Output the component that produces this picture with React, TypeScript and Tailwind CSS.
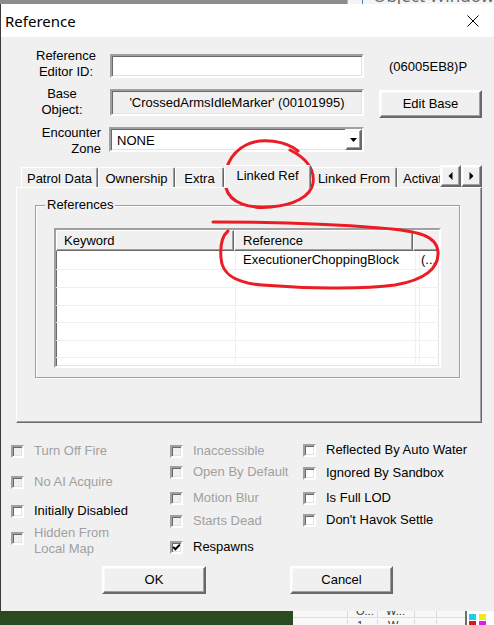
import React from "react";

const FONT = "font-['Liberation_Sans',Arial,sans-serif]";
const SUNKEN =
  "border-2 border-t-[#a0a0a0] border-l-[#a0a0a0] border-r-white border-b-white shadow-[inset_1px_1px_0_#696969,inset_-1px_-1px_0_#e3e3e3]";
const RAISED =
  "border-2 border-t-white border-l-white border-r-[#696969] border-b-[#696969] shadow-[inset_-1px_-1px_0_#a0a0a0,inset_1px_1px_0_#f8f8f8]";
const RAISED_THIN =
  "border border-t-white border-l-white border-r-[#696969] border-b-[#696969] shadow-[inset_-1px_-1px_0_#a0a0a0]";

function Box({ enabled = false, checked = false }: { enabled?: boolean; checked?: boolean }) {
  return (
    <span className={`block w-[13px] h-[13px] shrink-0 ${SUNKEN} ${enabled ? "bg-white" : "bg-[#f0f0f0]"}`}>
      {checked && (
        <svg width="9" height="9" viewBox="0 0 9 9" className="block">
          <path d="M1.2 4 L3.4 6.2 L7.8 1.6" stroke="#000" strokeWidth="2" fill="none" />
        </svg>
      )}
    </span>
  );
}

function CheckItem({
  lines,
  enabled = false,
  checked = false,
  className = "",
  boxTop = "mt-[2px]",
}: {
  lines: string[];
  enabled?: boolean;
  checked?: boolean;
  className?: string;
  boxTop?: string;
}) {
  return (
    <div className={`flex items-start ${className}`}>
      <span className={boxTop}>
        <Box enabled={enabled} checked={checked} />
      </span>
      <span className={`ml-[10px] leading-[16px] whitespace-nowrap ${enabled ? "text-black" : "text-[#a0a0a0]"}`}>
        {lines.map((l, i) => (
          <span key={i} className="block">
            {l}
          </span>
        ))}
      </span>
    </div>
  );
}

function Tab({ label, w }: { label: string; w: string }) {
  return (
    <div
      className={`${w} h-[20px] shrink-0 flex items-center justify-center pt-[2px] rounded-t-[2px] border-l border-t border-r border-l-white border-t-white border-r-[#696969] shadow-[inset_-1px_0_0_#a0a0a0] whitespace-nowrap`}
    >
      {label}
    </div>
  );
}

function Arrow({ dir }: { dir: "left" | "right" }) {
  return (
    <div className={`w-[21px] h-[22px] flex items-center justify-center ${RAISED}`}>
      <svg width="5" height="8" viewBox="0 0 5 8">
        {dir === "left" ? <path d="M4.5 0 L0.5 4 L4.5 8 Z" fill="#000" /> : <path d="M0.5 0 L4.5 4 L0.5 8 Z" fill="#000" />}
      </svg>
    </div>
  );
}

const rowHeights = ["h-[19px]", "h-[18px]", "h-[18px]", "h-[17px]", "h-[18px]", "h-[17px]"];

export default function App() {
  return (
    <div className={`relative w-[494px] h-[625px] overflow-hidden bg-[#3b3b3b] ${FONT} text-[13px] text-black`}>
      {/* desktop behind the dialog, top edge */}
      <div className="flex h-[4px]">
        <div className="w-[347px] bg-[#8d8d8d]" />
        <div className="flex-1 bg-[#f4f4f4] border-l border-[#b5b5b5] overflow-hidden">
          <div className="-mt-[13px] flex items-center pl-[14px] whitespace-nowrap">
            <span className="w-[13px] h-[16px] bg-[#4a7fb5] mr-[10px]" />
            <span className="font-['Noto_Sans',sans-serif] text-[17px] leading-[18px] text-[#6b6b6b]">Object Window</span>
          </div>
        </div>
      </div>

      {/* dialog window */}
      <div className="ml-[1px] h-[607px] flex flex-col bg-[#f0f0f0]">
        <div className="h-[33px] shrink-0 bg-white flex items-center justify-between pl-[4px] pr-[15px]">
          <span className="font-['Noto_Sans',sans-serif] text-[15px] leading-[20px]">Reference</span>
          <svg width="12" height="12" viewBox="0 0 12 12">
            <path d="M0.5 0.5 L11.5 11.5 M11.5 0.5 L0.5 11.5" stroke="#000" strokeWidth="1" />
          </svg>
        </div>

        <div className="flex-1 flex flex-col">
          {/* editor id */}
          <div className="flex mt-[11px] h-[32px] shrink-0">
            <div className="ml-[29px] w-[72px] text-center leading-[16px]">
              Reference
              <br />
              Editor ID:
            </div>
            <div className={`ml-[8px] mt-[6px] w-[254px] h-[24px] bg-white ${SUNKEN}`} />
            <div className="ml-[25px] mt-[11px] leading-[16px]">(06005EB8)P</div>
          </div>

          {/* base object */}
          <div className="flex mt-[6px] h-[32px] shrink-0">
            <div className="ml-[22px] w-[78px] text-center leading-[16px]">
              Base
              <br />
              Object:
            </div>
            <div
              className={`ml-[9px] mt-[3px] w-[254px] h-[27px] bg-[#f0f0f0] ${SUNKEN} flex items-center justify-center pt-[1px] whitespace-nowrap`}
            >
              'CrossedArmsIdleMarker' (00101995)
            </div>
            <div className={`ml-[15px] mt-[4px] w-[103px] h-[28px] ${RAISED} flex items-center justify-center`}>Edit Base</div>
          </div>

          {/* encounter zone */}
          <div className="flex mt-[7px] h-[32px] shrink-0">
            <div className="ml-[29px] w-[71px] text-right leading-[16px]">
              Encounter
              <br />
              Zone
            </div>
            <div className={`ml-[8px] mt-[2px] w-[255px] h-[25px] bg-white ${SUNKEN} flex`}>
              <div className="flex-1 flex items-center pl-[6px] pt-[2px]">NONE</div>
              <div className={`w-[17px] h-full ${RAISED} flex items-center justify-center`}>
                <svg width="7" height="4" viewBox="0 0 7 4">
                  <path d="M0 0 L7 0 L3.5 4 Z" fill="#000" />
                </svg>
              </div>
            </div>
          </div>

          {/* tab control */}
          <div className="ml-[15px] mt-[8px] w-[466px] shrink-0">
            <div className="flex items-end h-[22px] pl-[5px]">
              <Tab label="Patrol Data" w="w-[77px]" />
              <Tab label="Ownership" w="w-[77px]" />
              <Tab label="Extra" w="w-[49px]" />
              <div className="w-[87px] h-[23px] -mb-[1px] relative z-10 shrink-0 bg-[#f0f0f0] flex items-center justify-center pb-[2px] rounded-t-[2px] border-l border-t border-r border-l-white border-t-white border-r-[#696969] shadow-[inset_-1px_0_0_#a0a0a0] whitespace-nowrap">
                Linked Ref
              </div>
              <Tab label="Linked From" w="w-[86px]" />
              <div className="w-[43px] h-[20px] shrink-0 overflow-hidden">
                <div className="w-[120px] h-full flex items-center pl-[5px] pt-[2px] border-l border-t border-l-white border-t-white whitespace-nowrap">
                  Activate Parents
                </div>
              </div>
              <div className="flex self-start">
                <Arrow dir="left" />
                <Arrow dir="right" />
              </div>
            </div>

            <div className={`h-[236px] ${RAISED_THIN}`}>
              {/* references group */}
              <div className="ml-[18px] mt-[17px] w-[425px] h-[173px] relative border border-[#a0a0a0] shadow-[inset_1px_1px_0_#ffffff,1px_1px_0_#ffffff]">
                <span className="absolute -top-[9px] left-[9px] px-[2px] bg-[#f0f0f0] leading-[16px]">References</span>

                <div className={`ml-[18px] mt-[22px] w-[387px] h-[140px] bg-white overflow-hidden ${SUNKEN}`}>
                  <div className="flex h-[21px]">
                    <div className={`w-[178px] shrink-0 bg-[#f0f0f0] ${RAISED_THIN} flex items-center pl-[7px]`}>Keyword</div>
                    <div className={`w-[179px] shrink-0 bg-[#f0f0f0] ${RAISED_THIN} flex items-center pl-[8px]`}>Reference</div>
                    <div className={`w-[40px] shrink-0 bg-[#f0f0f0] ${RAISED_THIN}`} />
                  </div>
                  {rowHeights.map((h, i) => (
                    <div key={i} className={`flex ${h} border-b border-[#f0f0f0]`}>
                      <div className="w-[180px] shrink-0 border-r border-[#f0f0f0]" />
                      <div className="w-[180px] shrink-0 border-r border-[#f0f0f0] pl-[7px] pt-[1px] leading-[16px] whitespace-nowrap">
                        {i === 0 ? "ExecutionerChoppingBlock" : ""}
                      </div>
                      <div className="w-[4px] shrink-0 border-r border-[#f0f0f0]" />
                      <div className="flex-1 pl-[1px] pt-[1px] leading-[16px] whitespace-nowrap">{i === 0 ? "(..." : ""}</div>
                    </div>
                  ))}
                  <div className="flex h-[8px]">
                    <div className="w-[180px] shrink-0 border-r border-[#f0f0f0]" />
                    <div className="w-[180px] shrink-0 border-r border-[#f0f0f0]" />
                    <div className="w-[4px] shrink-0 border-r border-[#f0f0f0]" />
                  </div>
                </div>
              </div>
            </div>
          </div>

          {/* flags */}
          <div className="flex mt-[20px] h-[117px] pl-[10px] shrink-0">
            <div className="w-[159px] flex flex-col">
              <CheckItem lines={["Turn Off Fire"]} />
              <CheckItem lines={["No AI Acquire"]} className="mt-[15px]" />
              <CheckItem lines={["Initially Disabled"]} enabled className="mt-[13px]" />
              <CheckItem lines={["Hidden From", "Local Map"]} className="mt-[6px]" boxTop="mt-[7px]" />
            </div>
            <div className="w-[133px] flex flex-col">
              <CheckItem lines={["Inaccessible"]} />
              <CheckItem lines={["Open By Default"]} className="mt-[5px]" />
              <CheckItem lines={["Motion Blur"]} className="mt-[10px]" />
              <CheckItem lines={["Starts Dead"]} className="mt-[7px]" />
              <CheckItem lines={["Respawns"]} enabled checked className="mt-[10px]" />
            </div>
            <div className="flex flex-col -mt-[1px]">
              <CheckItem lines={["Reflected By Auto Water"]} enabled />
              <CheckItem lines={["Ignored By Sandbox"]} enabled className="mt-[7px]" />
              <CheckItem lines={["Is Full LOD"]} enabled className="mt-[9px]" />
              <CheckItem lines={["Don't Havok Settle"]} enabled className="mt-[6px]" />
            </div>
          </div>

          {/* dialog buttons */}
          <div className="flex mt-[6px] shrink-0">
            <div className={`ml-[101px] w-[104px] h-[28px] ${RAISED} flex items-center justify-center`}>OK</div>
            <div className={`ml-[84px] w-[103px] h-[28px] ${RAISED} flex items-center justify-center`}>Cancel</div>
          </div>
        </div>
      </div>

      {/* desktop behind the dialog, bottom edge */}
      <div className="flex h-[14px]">
        <div className="w-[293px] bg-[#2c4a1f]" />
        <div className="w-[172px] bg-[#f8f8f8] flex flex-col text-[11px] text-[#333]">
          <div className="h-[7px] overflow-hidden border-b border-[#dcdcdc]">
            <div className="-mt-[6px] flex leading-[12px]">
              <div className="w-[55px] border-r border-[#dcdcdc] h-[14px]" />
              <div className="w-[30px] border-r border-[#dcdcdc] h-[14px] pl-[8px]">O...</div>
              <div className="w-[37px] border-r border-[#dcdcdc] h-[14px] pl-[8px]">W...</div>
              <div className="w-[22px] border-r border-[#dcdcdc] h-[14px]" />
            </div>
          </div>
          <div className="h-[6px] overflow-hidden">
            <div className="mt-[1px] flex leading-[12px]">
              <div className="w-[55px] border-r border-[#dcdcdc] h-[14px]" />
              <div className="w-[30px] border-r border-[#dcdcdc] h-[14px] pl-[9px]">1</div>
              <div className="w-[37px] border-r border-[#dcdcdc] h-[14px] pl-[10px]">W...</div>
              <div className="w-[22px] border-r border-[#dcdcdc] h-[14px]" />
            </div>
          </div>
        </div>
        <div className="w-[2px] bg-[#6e6e6e]" />
        <div className="flex-1 bg-white grid grid-cols-[7px_7px] gap-x-[3px] gap-y-[1px] pl-[2px] pt-[3px] content-start">
          <div className="h-[6px] bg-[#19d3e3]" />
          <div className="h-[6px] bg-[#f2ea1c]" />
          <div className="h-[6px] bg-[#e0141c]" />
          <div className="h-[6px] bg-[#e21ce0]" />
        </div>
      </div>

      {/* red pen marks */}
      <svg className="absolute inset-0 pointer-events-none" width="494" height="625" viewBox="0 0 494 625">
        <path
          d="M 298 151 C 286 141, 262 137, 246 145 C 230 153, 222 171, 226 188 C 230 203, 249 209, 271 207 C 293 205, 311 197, 313 183 C 315 168, 306 158, 290 150"
          stroke="#ec1c24"
          strokeWidth="3"
          fill="none"
          strokeLinecap="round"
        />
        <path
          d="M 213 222 C 260 222, 330 224, 380 228 C 420 231, 437 236, 438 252 C 439 268, 425 280, 395 285 C 360 290, 300 288, 262 285 C 236 283, 222 275, 221 258 C 220 245, 222 236, 228 231"
          stroke="#ec1c24"
          strokeWidth="3"
          fill="none"
          strokeLinecap="round"
        />
      </svg>
    </div>
  );
}
